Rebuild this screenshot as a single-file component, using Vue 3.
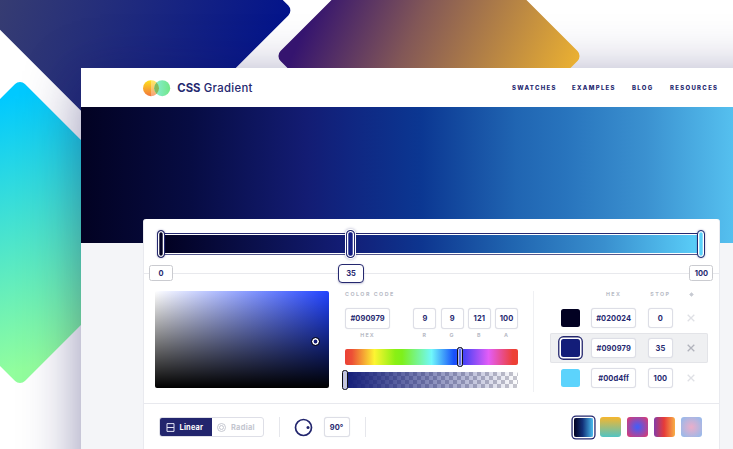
<script setup>
const nav = ['Swatches', 'Examples', 'Blog', 'Resources']
const markers = [
  { value: 0, x: 18, cls: 'first' },
  { value: 35, x: 207, cls: 'active' },
  { value: 100, x: 558.4, cls: 'last' },
]
const channels = [
  { label: 'R', value: 9 },
  { label: 'G', value: 9 },
  { label: 'B', value: 121 },
  { label: 'A', value: 100 },
]
const stops = [
  { hex: '#020024', stop: 0, cls: 'ink' },
  { hex: '#090979', stop: 35, cls: 'navy', active: true },
  { hex: '#00d4ff', stop: 100, cls: 'sky' },
]
const presets = ['ocean', 'meadow', 'orb', 'sunset', 'candy']
</script>

<template>
  <main class="stage">
    <svg class="backdrop" viewBox="0 0 733 449">
      <defs>
        <linearGradient id="g-navy" gradientUnits="userSpaceOnUse" x1="0" y1="0" x2="275" y2="70" gradientTransform="rotate(-45 137 10.5)">
          <stop offset="0" stop-color="#363c72" />
          <stop offset="1" stop-color="#03148b" />
        </linearGradient>
        <linearGradient id="g-teal" gradientUnits="userSpaceOnUse" x1="-20" y1="105" x2="55" y2="360" gradientTransform="rotate(-45 20 232.5)">
          <stop offset="0" stop-color="#00c9ff" />
          <stop offset="1" stop-color="#92fe9d" />
        </linearGradient>
      </defs>
      <rect x="26.5" y="-100" width="221" height="221" rx="7" transform="rotate(45 137 10.5)" fill="url(#g-navy)" />
      <rect x="-88.5" y="124" width="217" height="217" rx="7" transform="rotate(45 20 232.5)" fill="url(#g-teal)" />
    </svg>
    <div class="shade"></div>
    <svg class="backdrop" viewBox="0 0 733 449">
      <defs>
        <linearGradient id="g-gold" gradientUnits="userSpaceOnUse" x1="318" y1="0" x2="555" y2="110" gradientTransform="rotate(-45 429 56)">
          <stop offset="0" stop-color="#35146f" />
          <stop offset=".38" stop-color="#825757" />
          <stop offset="1" stop-color="#eab032" />
        </linearGradient>
      </defs>
      <rect x="320.5" y="-52.5" width="217" height="217" rx="7" transform="rotate(45 429 56)" fill="url(#g-gold)" />
    </svg>

    <section class="window">
      <header class="top">
        <div class="brand">
          <svg class="logo" width="28" height="17" viewBox="0 0 28 17">
            <defs>
              <linearGradient id="l-a" x1="0" y1="0" x2="0" y2="1">
                <stop offset="0" stop-color="#ffe21d" />
                <stop offset="1" stop-color="#f2763b" />
              </linearGradient>
              <linearGradient id="l-b" x1="0" y1="0" x2="1" y2="0">
                <stop offset="0" stop-color="#88edda" />
                <stop offset="1" stop-color="#71e786" />
              </linearGradient>
            </defs>
            <circle cx="8" cy="8.2" r="8" fill="url(#l-a)" />
            <path d="M8 .2a8 8 0 0 1 0 16z" fill="#fff" opacity=".32" />
            <circle cx="19.2" cy="8.2" r="8" fill="url(#l-b)" />
            <path d="M13.6 2.5a8 8 0 0 1 0 11.4a8 8 0 0 1 0-11.4z" fill="#85ba5c" />
          </svg>
          <span class="name"><b>CSS</b> Gradient</span>
        </div>
        <nav class="nav"><a v-for="n in nav" :key="n" :class="n.toLowerCase()">{{ n }}</a></nav>
      </header>
      <div class="hero"></div>

      <div class="card">
        <div class="slider">
          <div class="track"></div>
          <template v-for="m in markers" :key="m.value">
            <i class="handle" :class="m.cls" :style="{ left: m.x + 'px' }"></i>
            <span class="tag" :class="m.cls" :style="{ left: m.x + 'px' }">{{ m.value }}</span>
          </template>
        </div>

        <div class="controls">
          <div class="picker"><i class="cursor"></i></div>

          <div class="code">
            <h2 class="cap">Color code</h2>
            <div class="fields">
              <label class="field hex"><span class="box">#090979</span><span class="cap">Hex</span></label>
              <label v-for="c in channels" :key="c.label" class="field">
                <span class="box">{{ c.value }}</span><span class="cap">{{ c.label }}</span>
              </label>
            </div>
            <div class="bar hue"><i class="knob"></i></div>
            <div class="bar alpha"><i class="knob"></i></div>
          </div>

          <div class="stops">
            <div class="row head">
              <span></span><span class="cap">Hex</span><span class="cap">Stop</span>
              <svg width="5" height="5" viewBox="0 0 5 5"><circle cx="2.5" cy="2.5" r="1.7" fill="#c7cad2" /><path d="M.4 2.5h4.2M2.5.4v4.2" stroke="#c7cad2" stroke-width=".8" /></svg>
            </div>
            <div v-for="s in stops" :key="s.hex" class="row" :class="{ active: s.active }">
              <i class="chip" :class="s.cls"></i>
              <span class="box">{{ s.hex }}</span>
              <span class="box">{{ s.stop }}</span>
              <svg class="close" width="8" height="8" viewBox="0 0 8 8"><path d="M.7.7l6.6 6.6M7.3.7L.7 7.3" fill="none" stroke="currentColor" stroke-width="1.3" /></svg>
            </div>
          </div>
        </div>

        <footer class="options">
          <div class="toggle">
            <span class="on">
              <svg width="9" height="9" viewBox="0 0 9 9" fill="none" stroke="#e2e3f3"><path d="M1 .6h7v7.8H1zM1 4.5h7" /></svg>
              Linear
            </span>
            <span class="off">
              <svg width="9" height="9" viewBox="0 0 9 9" fill="none" stroke="#bfc2cc" stroke-width=".9"><circle cx="4.5" cy="4.5" r="4" /><circle cx="4.5" cy="4.5" r="2" /></svg>
              Radial
            </span>
          </div>
          <i class="rule"></i>
          <svg class="dial" width="19" height="19" viewBox="0 0 19 19"><circle cx="9.5" cy="9.5" r="8" fill="none" stroke="#22256d" stroke-width="1.7" /><circle cx="14" cy="9.5" r="1.5" fill="#22256d" /></svg>
          <span class="box angle">90°</span>
          <i class="rule"></i>
          <div class="presets"><i v-for="p in presets" :key="p" :class="p"></i></div>
        </footer>
      </div>
    </section>
  </main>
</template>

<style>
body { margin: 0; overflow: hidden; }
</style>

<style scoped>
* { box-sizing: border-box; }
.stage { position: relative; width: 733px; height: 449px; overflow: hidden; background: #fff; color: #25286f; font-family: Inter, "Liberation Sans", sans-serif; padding: 68px 0 0 81px; }
.backdrop { position: absolute; left: 0; top: 0; width: 733px; height: 449px; }
.shade { position: absolute; left: 81px; top: 68px; width: 800px; height: 600px; box-shadow: 0 12px 54px rgba(18, 14, 88, .46); }
.window { position: relative; width: 652px; height: 381px; background: #f4f5f8; overflow: hidden; }
.top { height: 39px; background: #fff; display: flex; justify-content: space-between; align-items: center; padding: 1px 0 0 62px; }
.brand { display: flex; align-items: center; gap: 6.3px; }
.name { font-size: 11.3px; line-height: 14px; letter-spacing: .33px; font-weight: 500; white-space: nowrap; }
.name b { font-weight: 700; letter-spacing: 0; }
.nav { display: grid; grid-template-columns: 60px 60px 38px 63px; }
.nav a { font-size: 6px; line-height: 8px; font-weight: 800; letter-spacing: 1.3px; text-transform: uppercase; white-space: nowrap; }
.hero { height: 136px; background: linear-gradient(90deg, #020222 0, #070c43 110px, #131c73 225px, #102580 265px, #0b3792 340px, #2065b2 435px, #2874bd 485px, #3b91d0 565px, #55c0ef 652px); }

.card { position: relative; margin: -24px 0 0 62px; width: 577px; height: 250px; background: #fff; border-radius: 3px 3px 0 0; border: solid #e9eaef; border-width: 0 1px; }
.slider { position: relative; height: 55px; border-bottom: 1px solid #e8e9ed; padding: 14px 16px 0; }
.track { height: 22px; border: 1px solid #25286f; box-shadow: inset 0 0 0 1px #fff; background: linear-gradient(90deg, #020121, #0b1150 19%, #131d76 34%, #0d358f 48%, #2065b0 65%, #398fce 82%, #5bd0fa) content-box; padding: 1px; border-bottom-color: #55588d; }
.handle { position: absolute; top: 11px; width: 8px; height: 28px; margin-left: -5px; border-radius: 4px; border: 1.5px solid #25286f; background: #030224; box-shadow: inset 0 0 0 1.3px #fff, 0 0 2px #22256d66; }
.handle.active { width: 9px; background: #131d82; box-shadow: inset 0 0 0 1.3px #fff, 0 0 0 1px #fff, 0 0 3px 1px #22256d66; }
.handle.last { background: #5ad1f9; }
.tag { position: absolute; top: 46px; width: 24px; height: 16px; margin-left: -13px; border: 1px solid #cacbd0; border-radius: 2.5px; background: #fff; font-size: 7.5px; font-weight: 700; line-height: 15px; text-align: center; }
.tag.active { top: 45px; width: 26px; height: 19px; margin-left: -13px; border: 1.5px solid #25286f; border-radius: 4px; line-height: 18px; box-shadow: 0 1px 2px #22256d40; }

.controls { display: flex; height: 130px; padding: 17px 11px 0 11px; border-bottom: 1px solid #e8e9ee; }
.picker { position: relative; width: 174px; height: 97px; border-radius: 2px; background: linear-gradient(0deg, #000 0, rgba(0, 0, 0, 0) 100%), linear-gradient(90deg, #fff, #2143ff); }
.cursor { position: absolute; left: 156.4px; top: 46px; width: 9px; height: 9px; border-radius: 50%; background: #131d76; border: 1.5px solid #090812; box-shadow: inset 0 0 0 1.6px #fff; }
.code { width: 173px; margin-left: 16px; }
.cap { margin: 0; font-size: 5.3px; line-height: 7px; font-weight: 700; letter-spacing: 1.5px; text-transform: uppercase; color: #b8bbc6; text-align: center; }
h2.cap { text-align: left; }
.fields { display: grid; grid-template-columns: 45px repeat(4, 23px); column-gap: 4.2px; justify-content: end; margin-top: 10px; }
.hex { margin-left: -19.2px; margin-right: 19.2px; }
.field { display: flex; flex-direction: column; }
.field .cap { margin-top: 3px; letter-spacing: 1.2px; }
.box { display: block; height: 20.5px; border: 1px solid #dddee6; border-radius: 3px; background: #fff; font-size: 7.5px; line-height: 19.5px; font-weight: 700; text-align: center; box-shadow: 0 0 1px #d8d9e2; letter-spacing: .08px; }
.bar { position: relative; height: 16px; border-radius: 2px; }
.hue { margin-top: 10.5px; background: linear-gradient(90deg, #eb4036 0, #ec5036 4%, #fdf532 17%, #8af014 29%, #7ef01b 33%, #70f8fb 50%, #1751fa 63%, #4b42f5 69%, #e35df7 83%, #ed4036 97%); }
.alpha { margin-top: 7px; background: linear-gradient(90deg, #131d78 0, #131d7800 100%), repeating-conic-gradient(#c6c6ce 0 25%, #fff 0 50%) 0 0 / 8px 8px; }
.knob { position: absolute; top: -2px; left: 112px; width: 6px; height: 20px; border: 1.6px solid #101014; border-radius: 2.5px; background: #5c6cf0; box-shadow: inset 0 0 0 1px #b9bdea; }
.alpha .knob { left: -3px; background: #c8c9d4; }

.stops { width: 174px; margin-left: 15px; padding-left: 16px; border-left: 1px solid #eff0f3; height: 101px; }
.row { display: grid; grid-template-columns: 18.5px 45px 25px 8px; column-gap: 11.7px; align-items: center; height: 30px; width: 158px; padding-left: 11px; border-radius: 2px; }
.head { height: 7px; margin-bottom: 5px; }
.head svg { margin-left: 4px; }
.row.active { background: #eff0f2; box-shadow: inset 0 0 0 1px #e3e4e8; }
.chip { width: 18.5px; height: 18.5px; border-radius: 2.5px; }
.ink { background: #020122; }
.navy { background: #131d79; }
.sky { background: #5cd3fc; }
.active .chip { box-shadow: 0 0 0 1.6px #fff, 0 0 0 2.9px #25286f; }
.close { color: #dfe0e5; margin-left: 2.4px; }
.active .close { color: #b1b3bc; }

.options { display: flex; align-items: flex-start; padding: 13px 17px 0 15px; }
.toggle { display: flex; width: 105px; height: 20px; border: 1px solid #dedfe7; border-radius: 3px; font-size: 7.4px; font-weight: 700; overflow: hidden; }
.toggle span { display: flex; align-items: center; gap: 5px; letter-spacing: .2px; }
.toggle .on { width: 53px; margin: -1px 0 -1px -1px; padding-left: 6.5px; background: #22256d; color: #fff; }
.toggle .off { padding-left: 5px; color: #c3c6cf; letter-spacing: .3px; }
.rule { width: 1px; height: 20px; background: #e6e7ec; margin-left: 15px; }
.dial { margin: .5px 0 0 13.5px; }
.angle { width: 26px; margin: 0 0 0 11px; height: 20px; }
.presets { display: flex; gap: 6px; margin-left: auto; }
.presets i { width: 21px; height: 20px; border-radius: 3px; }
.presets .ocean { width: 19px; height: 19px; margin: .5px 1.5px 0 .5px; border-radius: 2px; background: linear-gradient(90deg, #020122, #123078 45%, #4abdf0); box-shadow: 0 0 0 1.3px #fff, 0 0 0 2.6px #25286f; }
.presets .meadow { background: linear-gradient(#f6b62d, #51c4c3); }
.presets .orb { background: radial-gradient(circle, #4a5cf2 8%, #d43c78 90%); }
.presets .sunset { background: linear-gradient(90deg, #843ca8, #e63b39 48%, #f8af45); }
.presets .candy { background: radial-gradient(circle, #e7aecb 5%, #9cb9e9 85%); }
</style>
